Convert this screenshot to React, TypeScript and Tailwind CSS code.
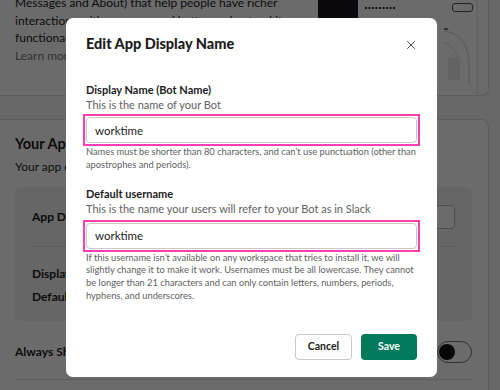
import { X } from "lucide-react";

const lato = { fontFamily: "Lato, 'Noto Sans', sans-serif" };

function PreviewArt() {
  return (
    <svg width="190" height="96" viewBox="0 0 190 96" className="block shrink-0">
      <rect x="13" y="-10" width="40" height="28" fill="#1c1622" />
      <line x1="60" y1="8" x2="91" y2="8" stroke="#333" strokeWidth="2" strokeDasharray="2 1.5" />
      <rect x="147.5" y="3.5" width="20" height="8" rx="2.5" fill="none" stroke="#555" />
      <line x1="139" y1="29" x2="143" y2="29" stroke="#555" strokeWidth="1.5" />
      <path d="M139 31 Q161 33 164 60 L164 84" fill="none" stroke="#d2d2d2" strokeWidth="1" />
      <path d="M139 42 Q151 46 153 62 L153 80" fill="none" stroke="#e0e0e0" strokeWidth="1" />
      <rect x="143" y="58" width="12" height="22" fill="#ececec" />
      <path d="M172 0 L172 94" stroke="#e3e3e3" strokeWidth="1" />
    </svg>
  );
}

function BackgroundPage() {
  return (
    <div className="h-[390px] w-[500px] overflow-hidden bg-[#f8f8f8]" style={lato}>
      <div className="-ml-2 flex h-[96px] w-[497px] items-start justify-between overflow-hidden rounded-br-[8px] border-b border-r border-[#dddddd] bg-white pl-[23px]">
        <p className="-mt-[6px] w-[290px] shrink-0 text-[12px] leading-[17.5px] text-[#1d1c1d]">
          Messages and About) that help people have richer interactions with your app and better understand its
          functionality.
          <br />
          <span className="text-[#7a7a7a]">Learn more</span>
        </p>
        <PreviewArt />
      </div>
      <div className="-ml-2 mt-[23px] h-[300px] w-[497px] rounded-tr-[8px] border-r border-t border-[#dddddd] bg-white pl-[23px] pr-[16px]">
        <h2 className="mt-[14px] text-[14.5px] font-bold leading-[20px] text-[#1d1c1d]">
          Your App&apos;s Presence in Slack
        </h2>
        <p className="mt-[4px] text-[12px] leading-[17px] text-[#1d1c1d]">
          Your app can customize how it appears to people in Slack.
        </p>
        <div className="mt-[12px] rounded-[6px] bg-[#f2f2f2] px-[17px]">
          <div className="flex h-[60px] items-center justify-between border-b border-[#dddddd]">
            <span className="text-[12px] font-bold text-[#1d1c1d]">App Display Name</span>
            <span className="flex h-[24px] items-center rounded-[4px] border border-[#bbbbbb] bg-white px-[18px] text-[11px] font-bold">
              Edit
            </span>
          </div>
          <div className="flex flex-col gap-[6px] pb-[16px] pt-[18px] text-[12px] font-bold leading-[17px] text-[#1d1c1d]">
            <span>Display Name (Bot Name): worktime</span>
            <span>Default username: worktime</span>
          </div>
        </div>
        <div className="flex h-[59px] items-center justify-between border-b border-[#dddddd] pt-[4px]">
          <span className="text-[12px] font-bold text-[#1d1c1d]">Always Show My Bot as Online</span>
          <span className="flex h-[22px] w-[35px] items-center rounded-full border border-[#777777] bg-white px-[1px]">
            <span className="h-[16px] w-[16px] rounded-full bg-[#111]" />
          </span>
        </div>
      </div>
    </div>
  );
}

function Field({
  label,
  hint,
  value,
  help,
  gapTop,
}: {
  label: string;
  hint: string;
  value: string;
  help: string[];
  gapTop: string;
}) {
  return (
    <div className="flex flex-col">
      <label className="text-[11px] font-bold leading-[15px] text-[#1d1c1d]">{label}</label>
      <span className="text-[11px] leading-[15px] text-[#616061]">{hint}</span>
      <div className={`-mx-[3px] border-2 border-[#ff3eb5] p-px ${gapTop}`}>
        <input
          readOnly
          value={value}
          className="block h-[26px] w-full rounded-[4px] border border-[#c9c9c9] bg-white px-[8px] text-[11.5px] text-[#1d1c1d] outline-none"
          style={lato}
        />
      </div>
      <p className="whitespace-nowrap text-[9.3px] leading-[12.8px] text-[#616061]">
        {help.map((line) => (
          <span key={line} className="block">
            {line}
          </span>
        ))}
      </p>
    </div>
  );
}

export default function App() {
  return (
    <div className="relative h-[390px] w-[500px] overflow-hidden">
      <BackgroundPage />
      <div className="absolute inset-0 bg-black/[0.58]" />
      <div
        className="absolute left-[66px] top-[18px] flex h-[359px] w-[371px] flex-col rounded-[7px] bg-white px-5"
        style={lato}
      >
        <div className="mt-[16px] flex h-[20px] items-center justify-between">
          <h1 className="text-[14.5px] font-black leading-[20px] text-[#1d1c1d]">Edit App Display Name</h1>
          <X className="-mr-[1px] mt-[2px] h-[14px] w-[14px] text-[#3b3b3b]" strokeWidth={1.6} />
        </div>
        <div className="mt-[28px] flex flex-col gap-[14px]">
          <Field
            label="Display Name (Bot Name)"
            hint="This is the name of your Bot"
            value="worktime"
            gapTop="mt-[2px]"
            help={[
              "Names must be shorter than 80 characters, and can’t use punctuation (other than",
              "apostrophes and periods).",
            ]}
          />
          <Field
            label="Default username"
            hint="This is the name your users will refer to your Bot as in Slack"
            value="worktime"
            gapTop="mt-[4px]"
            help={[
              "If this username isn’t available on any workspace that tries to install it, we will",
              "slightly change it to make it work. Usernames must be all lowercase. They cannot",
              "be longer than 21 characters and can only contain letters, numbers, periods,",
              "hyphens, and underscores.",
            ]}
          />
        </div>
        <div className="mt-auto flex justify-end gap-[9px] pb-[17px]">
          <button className="h-[26px] w-[57px] rounded-[4px] border border-[#c9c9c9] bg-white text-[10.5px] font-bold text-[#1d1c1d]">
            Cancel
          </button>
          <button className="h-[26px] w-[56px] rounded-[4px] bg-[#007a5a] text-[10.5px] font-bold text-white">
            Save
          </button>
        </div>
      </div>
    </div>
  );
}
